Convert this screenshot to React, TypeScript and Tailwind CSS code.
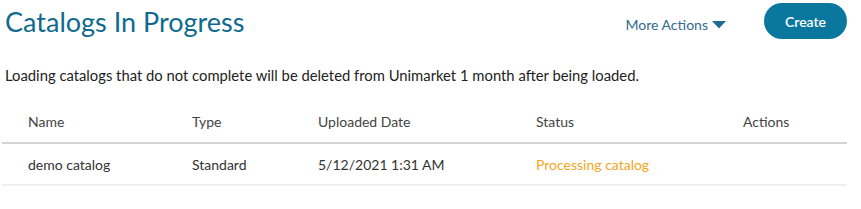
const columns = ["Name", "Type", "Uploaded Date", "Status", "Actions"];

const rows = [
  {
    name: "demo catalog",
    type: "Standard",
    uploaded: "5/12/2021 1:31 AM",
    status: "Processing catalog",
  },
];

const App = () => {
  return (
    <div className="w-[861px] h-[209px] bg-white font-['Lato',sans-serif] pl-[2px] pr-[14px]">
      {/* Header */}
      <div className="flex items-start justify-between h-[62px]">
        <h1 className="text-[27px] leading-none text-[#0e6a8e] pl-[3px] pt-[8px]">
          Catalogs In Progress
        </h1>
        <div className="flex items-start">
          <button className="flex items-center gap-[4px] text-[14px] text-[#2f6b8f] mt-[14px] mr-[38px]">
            More Actions
            <svg width="14" height="8" viewBox="0 0 14 8" className="text-[#1f6a93]" fill="currentColor">
              <path d="M0 0h14L7 7.5z" />
            </svg>
          </button>
          <button className="mt-[3px] h-[36px] w-[83px] rounded-full bg-[#0a779f] text-white text-[14px] font-semibold">
            Create
          </button>
        </div>
      </div>

      {/* Notice */}
      <p className="text-[14.8px] text-[#222] pl-[3px] leading-[26px]">
        Loading catalogs that do not complete will be deleted from Unimarket 1 month after being loaded.
      </p>

      {/* Table */}
      <table className="w-full mt-[19px] text-[14px] border-collapse">
        <thead>
          <tr className="border-b-2 border-[#d4d4d4] h-[36px] text-[#444]">
            {columns.map((col, i) => (
              <th
                key={col}
                className={`font-normal text-left pb-[6px] ${
                  i === 0 ? "pl-[26px] w-[190px]" : i === 1 ? "w-[126px]" : i === 2 ? "w-[218px]" : i === 3 ? "w-[207px]" : ""
                }`}
              >
                {col}
              </th>
            ))}
          </tr>
        </thead>
        <tbody>
          {rows.map((r) => (
            <tr key={r.name} className="border-b-2 border-[#efefef] h-[42px] text-[#333]">
              <td className="pl-[26px]">{r.name}</td>
              <td>{r.type}</td>
              <td>{r.uploaded}</td>
              <td className="text-[#f5a623]">{r.status}</td>
              <td></td>
            </tr>
          ))}
        </tbody>
      </table>
    </div>
  );
};

export default App;
